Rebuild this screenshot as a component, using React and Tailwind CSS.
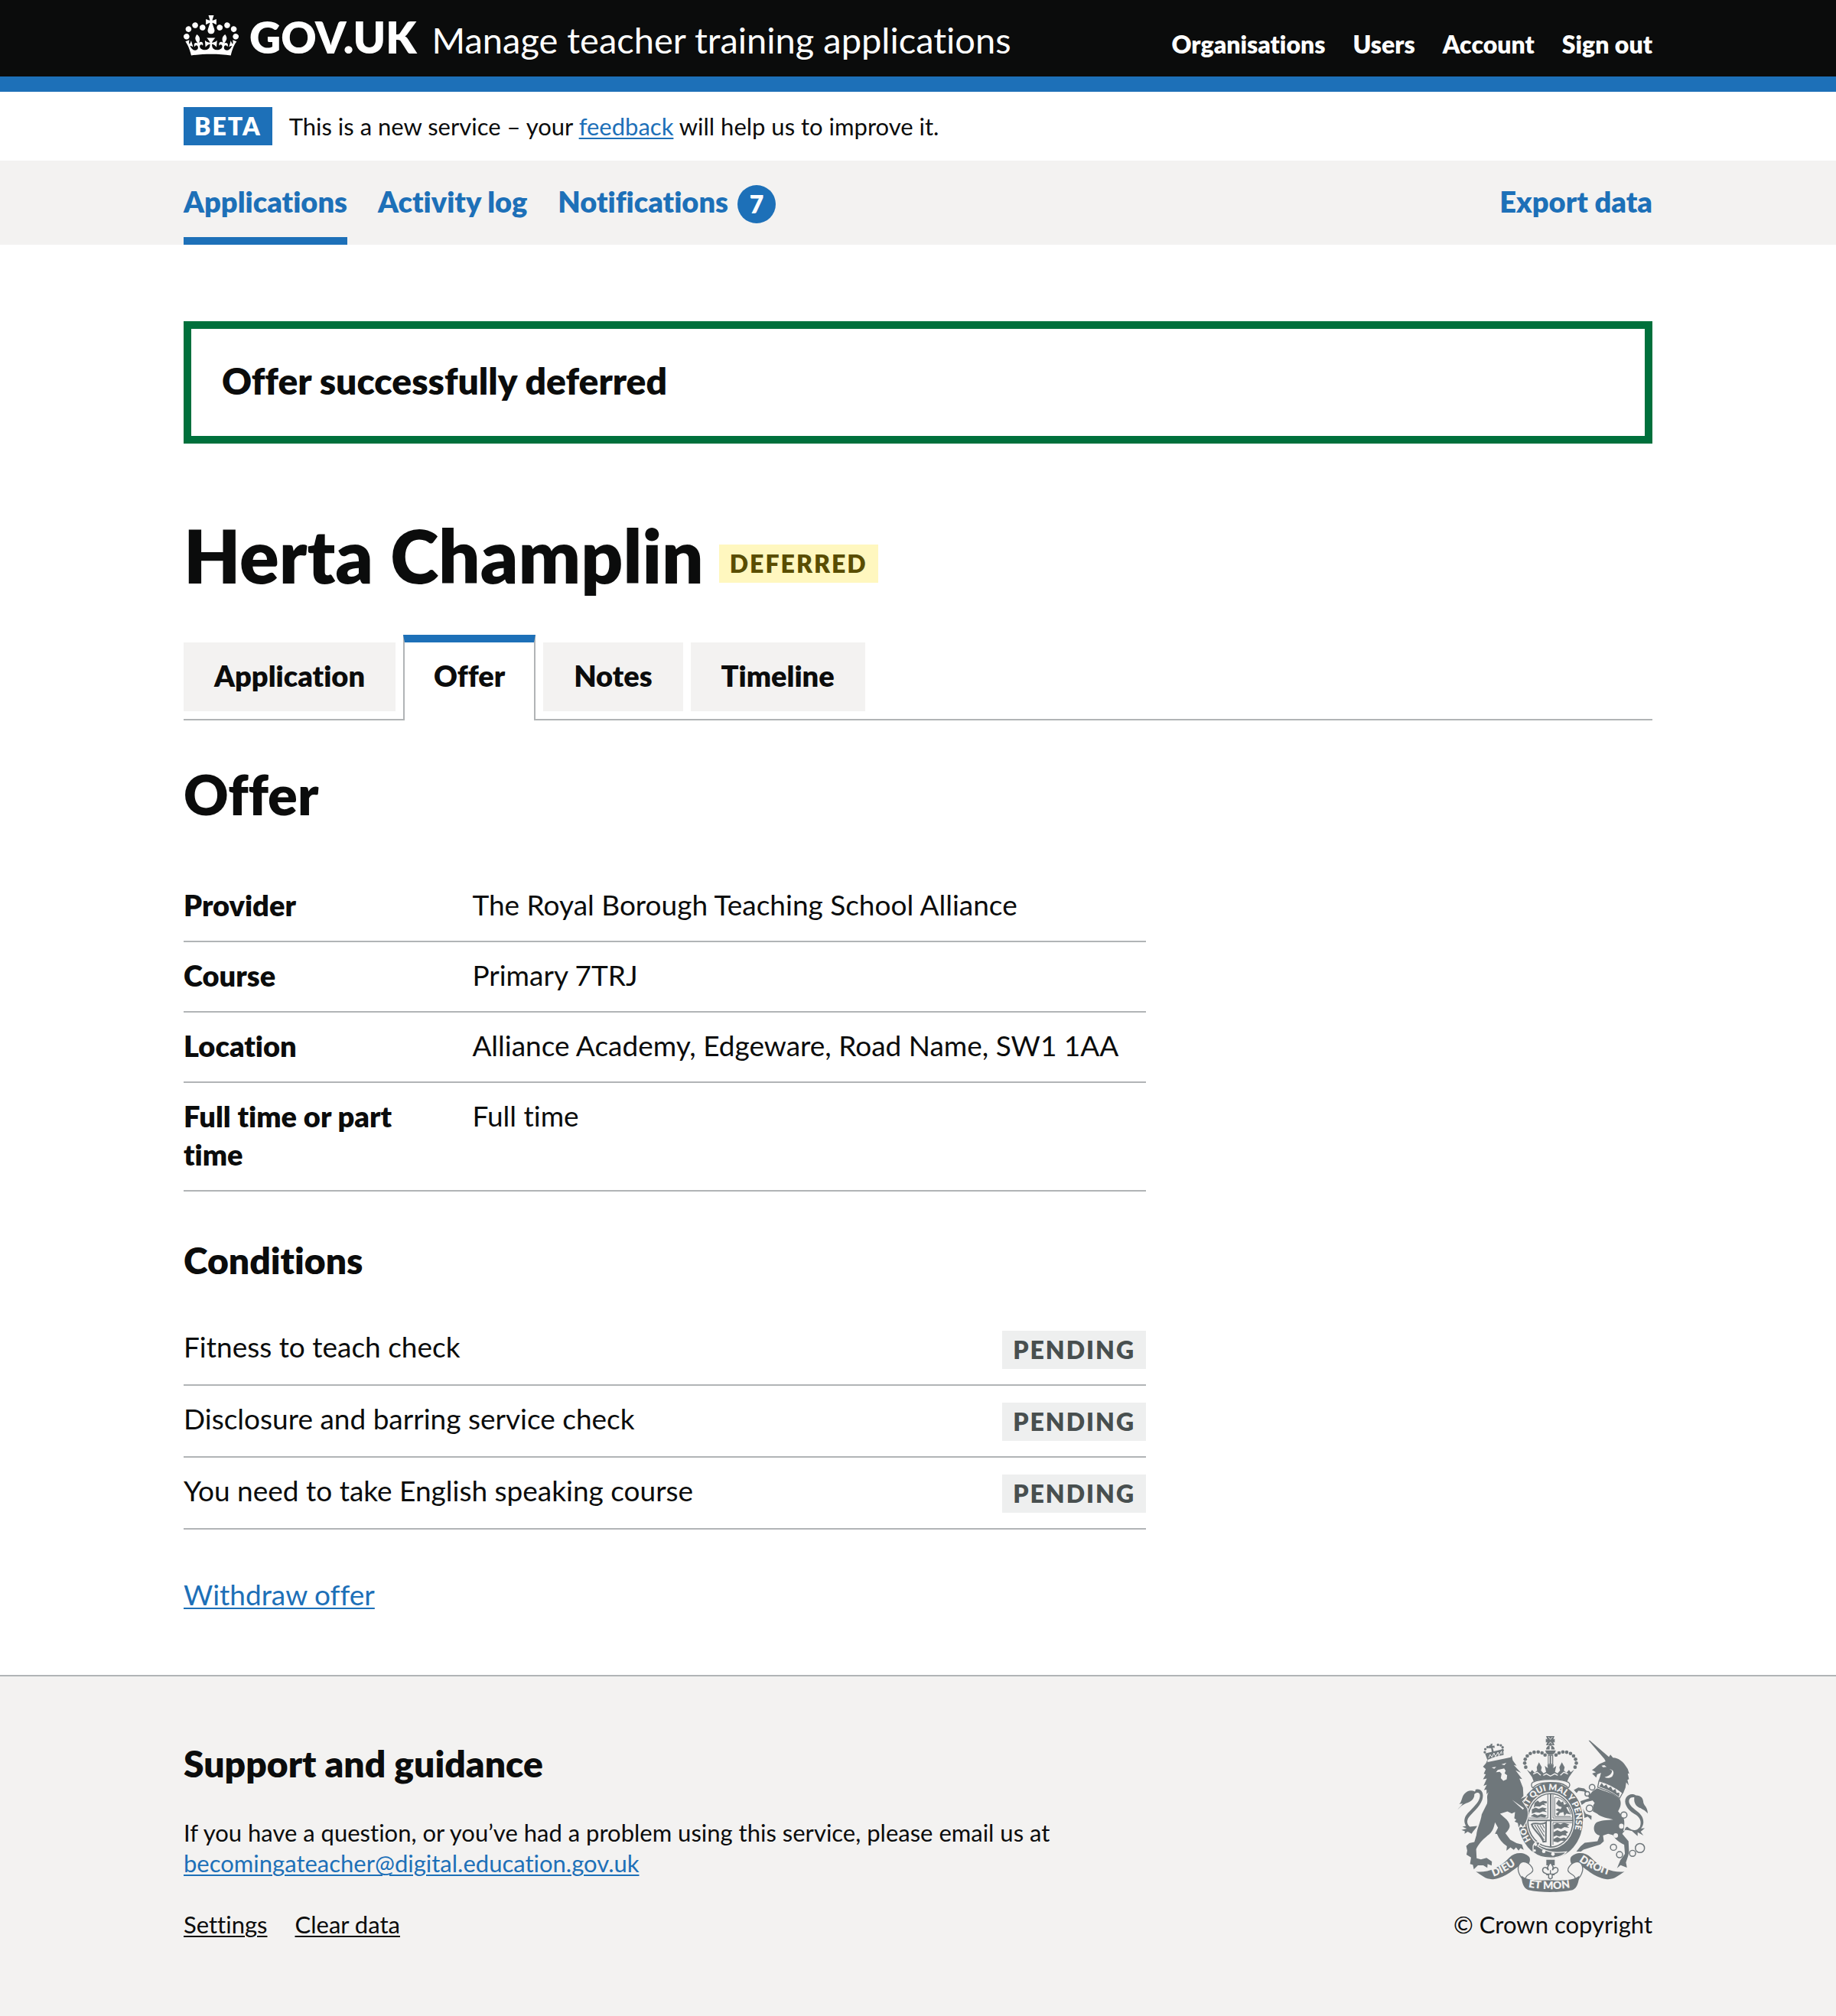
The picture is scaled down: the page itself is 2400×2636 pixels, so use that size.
import React from "react";

function Crown() {
  return (
    <svg viewBox="0 0 132 97" className="h-[53px] w-[72px] shrink-0" fill="currentColor" aria-hidden="true">
      <path
        fillRule="evenodd"
        d="M25 30.2c3.5 1.5 7.7-.2 9.1-3.7 1.5-3.6-.2-7.8-3.9-9.2-3.6-1.4-7.6.3-9.1 3.9-1.4 3.5.3 7.5 3.9 9zM9 39.5c3.6 1.5 7.8-.2 9.2-3.7 1.5-3.6-.2-7.8-3.9-9.1-3.6-1.5-7.6.2-9.1 3.8-1.4 3.5.3 7.5 3.8 9zM4.4 57.2c3.5 1.5 7.7-.2 9.1-3.8 1.5-3.6-.2-7.7-3.9-9.1-3.5-1.5-7.6.3-9.1 3.8-1.4 3.5.3 7.6 3.9 9.1zm38.3-21.4c3.5 1.5 7.7-.2 9.1-3.8 1.5-3.6-.2-7.7-3.9-9.1-3.6-1.5-7.6.3-9.1 3.8-1.3 3.6.4 7.7 3.9 9.1zm64.4-5.6c-3.6 1.5-7.8-.2-9.1-3.7-1.5-3.6.2-7.8 3.8-9.2 3.6-1.4 7.7.3 9.2 3.9 1.3 3.5-.4 7.5-3.9 9zm15.9 9.3c-3.6 1.5-7.7-.2-9.1-3.7-1.5-3.6.2-7.8 3.7-9.1 3.6-1.5 7.7.2 9.2 3.8 1.5 3.5-.3 7.5-3.8 9zm4.7 17.7c-3.6 1.5-7.8-.2-9.2-3.8-1.5-3.6.2-7.7 3.9-9.1 3.6-1.5 7.7.3 9.2 3.8 1.3 3.5-.4 7.6-3.9 9.1zM89.3 35.8c-3.6 1.5-7.8-.2-9.2-3.8-1.4-3.6.2-7.7 3.9-9.1 3.6-1.5 7.7.3 9.2 3.8 1.4 3.6-.3 7.7-3.9 9.1zM69.7 17.7l8.9 4.7V9.3l-8.9 2.8c-.2-.3-.5-.6-.9-.9L72.4 0H59.6l3.5 11.2c-.3.3-.6.5-.9.9l-8.8-2.8v13.1l8.8-4.7c.3.3.6.7.9.9l-5 15.4v.1c-.2.8-.4 1.6-.4 2.4 0 4.1 3.1 7.5 7 8.1h.2c.3 0 .7.1 1 .1.4 0 .7 0 1-.1h.2c4-.6 7.1-4.1 7.1-8.1 0-.8-.1-1.7-.4-2.4V34l-5.1-15.4c.4-.2.7-.6 1-.9zM66 92.8c16.9 0 32.8 1.1 47.1 3.2 4-16.9 8.9-26.7 14-33.5l-9.6-3.4c1 4.9 1.1 7.2 0 10.2-1.5-1.4-3-4.3-4.2-8.7L108.6 76c2.8-2 5-3.2 7.5-3.3-4.4 9.4-10 11.9-13.6 11.2-4.3-.8-6.3-4.6-5.6-7.9 1-4.7 5.7-5.9 8-.5 4.3-8.7-3-11.4-7.6-8.8 7.1-7.2 7.9-13.5 2.1-21.1-8 6.1-8.1 12.3-4.5 20.8-4.7-5.4-12.1-2.5-9.5 6.2 3.4-5.2 7.9-2 7.2 3.1-.6 4.3-6.4 7.8-13.5 7.2-10.3-.9-10.9-8-11.2-13.8 2.5-.5 7.1 1.8 11 7.3L80.2 60c-4.1 4.4-8 5.3-12.3 5.4 1.4-4.4 8-11.6 8-11.6H55.5s6.4 7.2 7.9 11.6c-4.2-.1-8-1-12.3-5.4l1.4 16.4c3.9-5.5 8.5-7.7 10.9-7.3-.3 5.8-.9 12.8-11.1 13.8-7.2.6-12.9-2.9-13.5-7.2-.7-5 3.8-8.3 7.1-3.1 2.7-8.7-4.6-11.6-9.4-6.2 3.7-8.5 3.6-14.7-4.6-20.8-5.8 7.6-5 13.9 2.2 21.1-4.7-2.6-11.9.1-7.7 8.8 2.3-5.5 7.1-4.2 8.1.5.7 3.3-1.3 7.1-5.7 7.9-3.5.7-9-1.8-13.5-11.2 2.5.1 4.7 1.3 7.5 3.3l-4.7-15.4c-1.2 4.4-2.7 7.2-4.3 8.7-1.1-3-.9-5.3 0-10.2l-9.5 3.4c5 6.9 9.9 16.7 14 33.5 14.8-2.1 30.8-3.2 47.7-3.2z"
      />
    </svg>
  );
}

const GREY = "#6f777b";
const PAPER = "#f3f2f1";

const crownPearls = [
  [341, 187], [337, 171], [339, 156], [347, 143], [359, 133], [374, 128], [390, 127], [405, 131], [417, 139],
  [535, 187], [540, 171], [537, 156], [529, 143], [517, 133], [502, 128], [487, 127], [472, 131], [460, 139],
];

const chainLinks = [
  [602, 266, 11], [583, 292, 9], [592, 349, 13], [727, 375, 12], [686, 502, 12], [710, 531, 12], [761, 526, 12], [790, 505, 18],
];

function CoatOfArms() {
  return (
    <svg viewBox="72 65 752 613" className="h-[204px] w-[250px]" fill={GREY} role="img" aria-label="Royal coat of arms">
      <defs>
        <path id="garter" d="M362 473 A100 118 0 1 1 514 473" fill="none" />
        <path id="dieu" d="M214 617 Q270 598 322 554" fill="none" />
        <path id="mon" d="M351 659 Q437 675 530 658" fill="none" />
        <path id="droit" d="M550 556 Q602 594 680 615" fill="none" />
      </defs>

      {/* unicorn: horn, head, body, tail */}
      <path d="M588 82 L593 82 L668 147 L674 138 L684 150 C706 151 724 166 734 182 L742 194 L748 213 L742 211 L747 234 L741 237 L746 259 L736 247 L733 268 L724 290 L713 285 L672 259 L628 240 L633 225 L637 209 L622 215 L618 228 L602 212 L617 207 L601 198 C615 192 619 181 634 173 L655 164 L650 154Z" />
      <path d="M639 181 L650 179 L659 186 L645 187Z M670 195 C690 197 689 213 681 223 C671 231 659 230 651 226 C671 221 681 212 680 200Z" fill={PAPER} />
      <path d="M622 270 C654 283 685 288 711 313 C718 330 714 345 704 360 L725 385 C732 403 728 430 721 450 L745 478 L747 520 L744 535 L735 562 L739 582 L714 572 L700 584 L713 553 L731 528 L728 492 C711 482 694 474 684 454 L665 449 L645 456 L648 478 L634 491 L568 511 L558 519 L540 519 L557 498 L573 484 L623 478 L632 456 C606 449 604 421 617 406 C633 395 660 395 685 393 C664 387 638 385 622 370 L605 361 L606 338 L612 328 L604 318 L577 324 L559 337 L570 358 L577 370 L600 378 L599 395 L585 381 L570 387 L566 369 L549 341 L557 320 L591 309 L571 283 L548 280 L541 289 L530 277 L548 267 L571 271 L594 293 L604 281Z" />
      <path d="M629 241 C660 249 692 264 722 288 L710 310 C685 287 655 277 624 266Z" fill={PAPER} stroke={GREY} strokeWidth="4" />
      <path d="M630 263 L640 249 L648 262 L658 255 L665 269 L676 263 L683 278 L694 273 L698 288 L709 287 L708 304 C685 284 656 273 630 263Z" />
      <path d="M715 449 C738 442 725 425 740 421 C761 438 776 440 790 422 C798 400 790 383 768 371 C739 353 724 326 736 306 C744 294 760 289 774 298 C796 298 803 311 804 328 C809 342 819 343 821 369 C813 358 802 354 793 348 C775 343 765 327 768 306 C752 303 744 314 748 328 C756 350 789 361 799 383 C808 404 803 418 794 428 L809 427 L793 441 L804 456 L781 443 L781 458 L758 438 C742 437 734 425 715 449Z" />
      <ellipse cx="717" cy="419" rx="9" ry="10" fill={PAPER} />
      <circle cx="695" cy="456" r="9" fill={PAPER} />
      {chainLinks.map(([x, y, r]) => (
        <circle key={`${x}-${y}`} cx={x} cy={y} r={r} fill={PAPER} stroke={GREY} strokeWidth="4.5" />
      ))}

      {/* garter and shield */}
      <ellipse cx="439" cy="396" rx="133" ry="155" fill={PAPER} />
      <ellipse cx="439" cy="396" rx="127" ry="149" />
      <ellipse cx="438" cy="396" rx="95" ry="112" fill={PAPER} />
      <ellipse cx="438" cy="396" rx="89" ry="105" fill="none" stroke={GREY} strokeWidth="5" />
      <text fontFamily="Lato, sans-serif" fontWeight="800" fontSize="34" fill={PAPER}>
        <textPath href="#garter">HON SOIT QUI MAL Y PENSE</textPath>
      </text>
      <path d="M436 292 H442 V500 H436Z M349 393 H527 V399 H349Z" />
      <path d="M428 294 V387 H354 M448 294 V387 H523 M448 405 H523 M448 405 V493" fill="none" stroke={GREY} strokeWidth="3" />
      <path d="M376 327 l12 -9 l8 8 l13 -7 l15 3 v7 l-12 1 l10 8 l-16 -3 l-10 7 l-16 -1 l-8 6z M365 353 l15 -7 l12 5 l14 -6 l18 5 l-8 6 l9 8 l-17 -3 l-12 5 l-15 -2 l-16 6z M360 380 l14 -9 l14 6 l15 -6 l21 6 l-8 8 l-17 -3 l-14 4z" />
      <path d="M450 415 l14 -9 l14 6 l13 -7 l22 8 l-9 5 l8 8 l-19 -3 l-13 7 l-14 -4 l-14 6z M450 443 l15 -8 l14 6 l16 -6 l13 8 l-9 6 l5 8 l-18 -3 l-13 6 l-12 -4 l-11 5z M450 470 l15 -8 l13 6 l14 -5 l10 6 l-8 8 l-14 -1 l-13 7 l-17 -4z" />
      <path d="M460 330 L471 314 L480 326 L488 321 L491 335 L504 331 L513 342 L500 345 L507 358 L517 373 L501 369 L493 379 L489 363 L475 367 L468 379 L459 371 L471 362 L458 355 L468 349 L478 353 L483 344 L471 341Z" />
      <path d="M455 381 H518 M455 306 V381 M455 305 C486 306 510 331 518 372" fill="none" stroke={GREY} strokeWidth="3" />
      <path d="M364 412 C378 401 405 418 421 404 L420 479 L410 480 C399 448 377 445 364 412Z" fill="none" stroke={GREY} strokeWidth="6" />
      <path d="M376 414 L413 474 M386 414 L414 459 M397 415 L414 443 M407 413 L415 427" stroke={GREY} strokeWidth="3.5" />

      {/* buckle and strap */}
      <path d="M370 497 C375 481 389 476 397 486 L388 498 C418 520 460 526 501 520 C480 548 408 554 370 522Z" stroke={PAPER} strokeWidth="4" />
      <circle cx="380" cy="491" r="6" fill={PAPER} />
      <circle cx="376" cy="515" r="5" fill={PAPER} />
      <circle cx="412" cy="518" r="7" fill={PAPER} />
      <circle cx="448" cy="529" r="7" fill={PAPER} />

      {/* lion: tail, body, legs, crown */}
      <path d="M72 355 C82 343 90 336 93 330 L79 332 C91 324 88 305 100 292 C112 278 128 276 141 283 C148 277 136 276 150 274 C168 273 178 291 170 315 C160 344 128 368 116 386 C108 399 110 412 121 421 L150 418 C145 430 133 438 128 449 L113 441 L100 449 L102 439 L88 434 L109 429 L92 421 L106 418 C95 400 100 383 113 368 C133 345 158 326 161 302 C163 286 150 283 139 293 C140 316 119 324 107 329 C92 335 84 343 72 355Z" />
      <path
        stroke={PAPER}
        strokeWidth="7"
        paintOrder="stroke"
        d="M173 185 L184 172 C190 164 184 157 198 163 L262 143 L286 142 L290 160 L305 181 L294 178 L322 209 L301 199 L327 234 L316 232 L330 268 L332 300 L322 311 L347 300 L327 322 L346 350 C353 375 348 386 341 404 L330 421 L321 410 L313 424 L310 407 L297 401 L304 393 L296 388 L299 363 L286 369 L269 361 L240 370 L266 393 C286 416 279 428 261 447 L280 472 L305 486 L326 491 L333 512 L320 505 L313 515 L303 502 L294 512 L281 502 L265 516 L267 498 C249 487 236 470 228 450 L220 449 L232 425 L220 404 C216 426 209 444 191 456 C171 473 153 492 146 510 L148 545 L165 550 L187 544 L208 558 L207 574 L191 568 L190 583 L174 573 L153 573 L137 589 L133 571 L122 568 L126 542 L108 531 L111 515 L107 497 L119 486 L139 481 L147 454 C149 428 164 402 168 372 L189 330 C193 310 184 305 195 285 L187 293 L187 275 L177 277 L188 256 L175 260 L188 232 L173 235 L184 215 L176 213 L184 195Z"
      />
      <path d="M207 188 L225 186 L217 193Z M245 176 L265 170 L257 179Z M231 198 L256 192 L262 201 L258 211 L268 219 L266 235 L253 241 L243 230 L246 213 L239 205 L224 207Z M287 315 L334 348 L330 354Z" fill={PAPER} />
      <path d="M188 168 L198 156 L274 136 L286 141 L282 148Z" fill={PAPER} />
      <path d="M190 159 L181 133 L252 116 L254 139 C232 142 211 148 190 159Z" />
      <path d="M195 151 L201 137 L208 148 L216 131 L222 145 L232 128 L235 142 L246 124 L247 136" fill="none" stroke={PAPER} strokeWidth="3" />
      {[[180, 128], [182, 116], [191, 108], [201, 105], [232, 99], [243, 101], [250, 109], [250, 120]].map(([x, y]) => (
        <circle key={`${x}-${y}`} cx={x} cy={y} r="5" />
      ))}
      <path d="M202 96 L210 94 L209 103 L218 102 L219 111 L211 110 L216 128 L208 129 L205 112 L196 113 L196 105 L204 105Z" />

      {/* crown */}
      <path d="M421 65 H454 L449 78 L455 75 V90 L449 87 L454 101 H421 L426 87 L420 90 V75 L426 78Z" />
      <path d="M430 68 L438 78 L446 68 M430 98 L438 88 L446 98" fill="none" stroke={PAPER} strokeWidth="2.5" />
      <path d="M421 117 A17 16 0 0 1 455 117Z M418 121 H459 C457 134 447 138 438 138 C429 138 420 134 418 121Z" />
      <path d="M435 103 H441 V119 H435Z" fill={PAPER} />
      <path d="M428 138 H449 V177 H428Z" />
      <path d="M433 142 V174 M443 142 V174" stroke={PAPER} strokeWidth="4" />
      {crownPearls.map(([x, y]) => (
        <circle key={`${x}-${y}`} cx={x} cy={y} r="7" />
      ))}
      <path d="M345 196 L359 207 L366 198 L376 209 L386 200 L384 187 L393 168 L404 187 L401 200 L411 211 L421 205 L416 182 L428 191 L426 177 H451 L449 191 L461 182 L456 205 L466 211 L476 200 L473 187 L483 168 L494 187 L491 200 L501 209 L511 198 L518 207 L532 196 L511 226 L504 243 C461 230 416 230 372 243 L366 226Z" />
      <path d="M370 214 L386 207 L400 219 M410 219 L422 213 L438 222 L455 213 L467 219 M477 219 L491 207 L507 214" fill="none" stroke={PAPER} strokeWidth="4" />
      <path d="M369 246 C400 231 476 231 508 246 C518 253 514 264 507 269 C496 252 468 247 438 247 C408 247 380 252 370 269 C362 264 361 252 369 246Z" fill={PAPER} stroke={GREY} strokeWidth="4" />

      {/* ribbon and motto */}
      <path d="M145 598 C190 603 237 584 277 542 C298 519 340 520 356 542 C360 552 356 566 348 574 C340 568 334 567 326 568 C302 582 262 622 218 627 C184 631 170 613 145 598Z" />
      <path d="M729 598 C684 603 637 584 597 542 C576 519 534 520 518 542 C514 552 518 566 526 574 C534 568 540 567 548 568 C572 582 612 622 656 627 C690 631 704 613 729 598Z" />
      <path d="M318 566 C335 545 372 577 369 593 C365 610 342 606 340 626 L334 634 C310 608 305 582 318 566Z" fill={PAPER} stroke={GREY} strokeWidth="4" />
      <path d="M558 566 C541 545 504 577 507 593 C511 610 534 606 536 626 L542 634 C566 608 571 582 558 566Z" fill={PAPER} stroke={GREY} strokeWidth="4" />
      <path d="M324 614 C352 637 400 632 438 632 C476 632 524 637 552 614 C548 642 544 662 525 670 C475 681 400 681 351 670 C331 662 326 642 324 614Z" />
      <g fontFamily="Lato, sans-serif" fontWeight="800" fontSize="42" fill={PAPER}>
        <text><textPath href="#dieu">DIEU</textPath></text>
        <text><textPath href="#mon">ET MON</textPath></text>
        <text><textPath href="#droit">DROIT</textPath></text>
      </g>

      {/* fleur-de-lis */}
      <path d="M422 551 H455 V573 H422Z" />
      <path d="M438 560 L449 580 L446 592 C455 574 471 581 467 596 C463 609 452 601 452 610 H445 V622 L438 627 L431 622 V610 H424 C424 601 413 609 408 596 C405 581 421 574 430 592 L427 580Z" fill={PAPER} stroke={GREY} strokeWidth="4.5" />
      <path d="M424 607 H452 M438 592 V607" stroke={GREY} strokeWidth="4" />
    </svg>
  );
}

const linkBlue = "text-[#1d70b8] underline decoration-2 underline-offset-3";

function Tag({ className, children }) {
  return (
    <strong className={`inline-block px-3.5 text-[32px] leading-[50px] font-extrabold tracking-[2px] uppercase ${className}`}>
      {children}
    </strong>
  );
}

const headerLinks = ["Organisations", "Users", "Account", "Sign out"];

const tabs = [
  { label: "Application" },
  { label: "Offer", current: true },
  { label: "Notes" },
  { label: "Timeline" },
];

const offer = [
  ["Provider", "The Royal Borough Teaching School Alliance"],
  ["Course", "Primary 7TRJ"],
  ["Location", "Alliance Academy, Edgeware, Road Name, SW1 1AA"],
  ["Full time or part time", "Full time"],
];

const conditions = ["Fitness to teach check", "Disclosure and barring service check", "You need to take English speaking course"];

export default function App() {
  return (
    <div className="flex min-h-screen flex-col bg-white font-['Lato',sans-serif] text-[#0b0c0c] [font-variant-ligatures:none]">
      <header className="border-b-20 border-[#1d70b8] bg-[#0b0c0c] text-white">
        <div className="mx-auto flex h-[100px] w-4/5 items-end justify-between pb-[27px]">
          <div className="flex items-end gap-5">
            <a href="#" className="flex items-end gap-3.5">
              <Crown />
              <span className="text-[57px] leading-[50px] font-extrabold">GOV.UK</span>
            </a>
            <a href="#" className="text-[47px] leading-[42px]">Manage teacher training applications</a>
          </div>
          <nav aria-label="Account" className="flex gap-9 text-[32px] leading-[31px] font-extrabold">
            {headerLinks.map((label) => (
              <a key={label} href="#">{label}</a>
            ))}
          </nav>
        </div>
      </header>

      <div className="mx-auto flex w-4/5 items-center gap-[22px] py-5">
        <Tag className="bg-[#1d70b8] text-white">Beta</Tag>
        <p className="text-[31px] leading-[50px]">
          This is a new service – your <a href="#" className={linkBlue}>feedback</a> will help us to improve it.
        </p>
      </div>

      <nav aria-label="Main" className="bg-[#f3f2f1]">
        <div className="mx-auto flex h-[110px] w-4/5 gap-10 text-[38px] leading-[50px] font-extrabold text-[#1d70b8]">
          <a href="#" aria-current="page" className="border-b-10 border-[#1d70b8] pt-7">Applications</a>
          <a href="#" className="pt-7">Activity log</a>
          <a href="#" className="flex gap-3 pt-7">
            Notifications
            <span className="mt-1 size-[50px] rounded-full bg-[#1d70b8] text-center text-[32px] text-white">7</span>
          </a>
          <a href="#" className="ml-auto pt-7">Export data</a>
        </div>
      </nav>

      <main className="mx-auto w-4/5 pt-[100px] pb-20">
        <div role="alert" className="border-10 border-[#00703c] px-10 pt-[38px] pb-[42px]">
          <h2 className="text-[48px] leading-[60px] font-extrabold">Offer successfully deferred</h2>
        </div>

        <h1 className="mt-24 flex items-end gap-5 text-[96px] leading-[100px] font-extrabold">
          Herta Champlin
          <Tag className="mb-3.5 bg-[#fff7bf] text-[#594d00]">Deferred</Tag>
        </h1>

        <nav aria-label="Sections" className="mt-[54px] flex items-center gap-2.5 border-b-2 border-[#b1b4b6] text-[38px] leading-[50px] font-extrabold">
          {tabs.map(({ label, current }) =>
            current ? (
              <a key={label} href="#" aria-current="page" className="-mb-0.5 border-x-2 border-t-10 border-x-[#b1b4b6] border-t-[#1d70b8] bg-white px-[38px] pt-[18px] pb-[34px]">
                {label}
              </a>
            ) : (
              <a key={label} href="#" className="bg-[#f3f2f1] px-10 pt-[18px] pb-[22px]">{label}</a>
            )
          )}
        </nav>

        <h2 className="mt-14 text-[72px] leading-20 font-extrabold">Offer</h2>

        <dl className="mt-[62px] w-[1258px] text-[37px] leading-[50px]">
          {offer.map(([key, value]) => (
            <div key={key} className="grid grid-cols-[30%_1fr] border-b-2 border-[#b1b4b6] pt-[18px] pb-[22px]">
              <dt className="pr-10 text-[38px] font-extrabold">{key}</dt>
              <dd>{value}</dd>
            </div>
          ))}
        </dl>

        <h2 className="mt-[60px] text-[48px] leading-[60px] font-extrabold">Conditions</h2>

        <ul className="mt-10 w-[1258px] text-[37px] leading-[50px]">
          {conditions.map((condition) => (
            <li key={condition} className="flex justify-between border-b-2 border-[#b1b4b6] pt-[18px] pb-5">
              <span>{condition}</span>
              <Tag className="mt-1 bg-[#eeefef] text-[#484f4f]">Pending</Tag>
            </li>
          ))}
        </ul>

        <p className="mt-[60px] text-[37px] leading-[50px]">
          <a href="#" className={linkBlue}>Withdraw offer</a>
        </p>
      </main>

      <footer className="grow border-t-2 border-[#b1b4b6] bg-[#f3f2f1] pt-[78px]">
        <div className="mx-auto flex w-4/5 items-end justify-between text-[31px] leading-10">
          <div>
            <h2 className="text-[48px] leading-[60px] font-extrabold">Support and guidance</h2>
            <p className="mt-10">
              If you have a question, or you’ve had a problem using this service, please email us at
              <br />
              <a href="#" className={linkBlue}>becomingateacher@digital.education.gov.uk</a>
            </p>
            <div className="mt-10 flex gap-9">
              <a href="#" className="underline decoration-2 underline-offset-3">Settings</a>
              <a href="#" className="underline decoration-2 underline-offset-3">Clear data</a>
            </div>
          </div>
          <a href="#" className="flex flex-col items-center gap-[22px]">
            <CoatOfArms />
            © Crown copyright
          </a>
        </div>
      </footer>
    </div>
  );
}
